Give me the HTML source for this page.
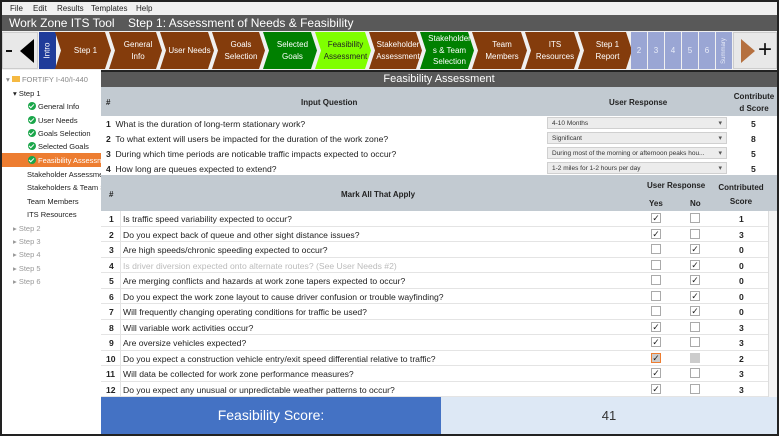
<!DOCTYPE html>
<html><head><meta charset="utf-8"><style>
*{box-sizing:border-box;margin:0;padding:0}
body{width:779px;height:436px;overflow:hidden;background:#222;font-family:"Liberation Sans",sans-serif;position:relative}
.abs{position:absolute}
#menu{left:2px;top:2px;width:775px;height:13px;background:#f0f0f0;font-size:8px;color:#222}
#menu span{position:absolute;top:2px}
#title{left:2px;top:15px;width:775px;height:16px;background:#595959;color:#fff;font-size:12px}
#nav{left:2px;top:31px;width:775px;height:39px;background:#f0f0f0}
.ch{position:absolute;top:1px;height:37px;color:#fff;font-size:8px;display:flex;align-items:center;justify-content:center;text-align:center;line-height:1.45;clip-path:polygon(0 0,calc(100% - 6px) 0,100% 50%,calc(100% - 6px) 100%,0 100%,6px 50%);padding-left:5px}
.br{background:#843c0c}.gr{background:#008000}.lg{background:#7fff00;color:#222}
.sq{position:absolute;top:1px;height:37px;width:16px;background:#9aa6d4;color:#e8ecf8;font-size:8px;display:flex;align-items:center;justify-content:center}
#side{left:2px;top:70px;width:99px;height:364px;background:#fff;font-size:7.5px;color:#222}
#side div{position:absolute;white-space:nowrap}
.ck{display:inline-block;width:8px;height:8px;border-radius:50%;background:#1aa64a;vertical-align:-1px;margin-right:2px;position:relative}
.ck:after{content:"";position:absolute;left:2px;top:1px;width:2px;height:4px;border:solid #fff;border-width:0 1.3px 1.3px 0;transform:rotate(45deg)}
#main{left:101px;top:72px;width:676px;height:325px;background:#fff;font-size:8.6px;color:#222}
.hd{background:#c2cad1;font-weight:bold;font-size:8px}
.row{position:absolute;left:0;width:667px;border-bottom:1px solid #e4e4e4}
.row span{position:absolute;white-space:nowrap}
.dd{position:absolute;left:446px;width:180px;height:12px;background:#ececec;border:1px solid #d0d0d0;font-size:6.5px;padding:2px 4px;color:#333}
.dd:after{content:"▾";position:absolute;right:4px;top:1px;font-size:7px;color:#555}
.cb{position:absolute;width:10px;height:10px;border:1px solid #aaa;background:#fff;font-size:9px;line-height:8px;text-align:center;color:#222}
</style></head><body>
<div id="menu" class="abs"><span style="left:8px">File</span><span style="left:31px">Edit</span><span style="left:55px">Results</span><span style="left:89px">Templates</span><span style="left:134px">Help</span></div>
<div id="title" class="abs"><span class="abs" style="left:7px;top:1px">Work Zone ITS Tool</span><span class="abs" style="left:126px;top:1px">Step 1: Assessment of Needs &amp; Feasibility</span></div>
<div id="nav" class="abs">
<div class="abs" style="left:0;top:1px;width:36px;height:37px;background:#e8e8e8;border:1px solid #ccc"><div class="abs" style="left:3px;top:17px;width:6px;height:2px;background:#111"></div><div class="abs" style="left:17px;top:6px;width:0;height:0;border-top:12px solid transparent;border-bottom:12px solid transparent;border-right:14px solid #000"></div></div>
<div class="abs" style="left:37px;top:1px;width:17px;height:37px;background:#1f3c9a;color:#fff;font-size:8px"><div style="transform:rotate(-90deg);position:absolute;left:-6px;top:14px;width:28px;text-align:center">Intro</div></div>
<div class="ch br" style="left:53px;width:56px">Step 1</div>
<div class="ch br" style="left:107px;width:53px">General<br>Info</div>
<div class="ch br" style="left:158px;width:54px">User Needs</div>
<div class="ch br" style="left:210px;width:53px">Goals<br>Selection</div>
<div class="ch gr" style="left:261px;width:54px">Selected<br>Goals</div>
<div class="ch lg" style="left:313px;width:56px">Feasibility<br>Assessment</div>
<div class="ch br" style="left:367px;width:53px">Stakeholder<br>Assessment</div>
<div class="ch gr" style="left:418px;width:54px">Stakeholder<br>s &amp; Team<br>Selection</div>
<div class="ch br" style="left:470px;width:55px">Team<br>Members</div>
<div class="ch br" style="left:523px;width:55px">ITS<br>Resources</div>
<div class="ch br" style="left:576px;width:54px">Step 1<br>Report</div>
<div class="sq" style="left:629px">2</div><div class="sq" style="left:646px">3</div><div class="sq" style="left:663px">4</div><div class="sq" style="left:680px">5</div><div class="sq" style="left:697px">6</div><div class="sq" style="left:714px;font-size:6px"><span style="transform:rotate(-90deg)">Summary</span></div>
<div class="abs" style="left:731px;top:1px;width:44px;height:37px;background:#e8e8e8;border:1px solid #ccc"><div class="abs" style="left:7px;top:6px;border-top:12px solid transparent;border-bottom:12px solid transparent;border-left:14px solid #b5703f"></div><div class="abs" style="left:24px;top:4px;font-size:24px;line-height:26px;color:#111">+</div></div>
</div>
<div id="side" class="abs">
<div style="left:4px;top:5px;color:#888">▾ <span style="display:inline-block;width:8px;height:6px;background:#f5b942"></span> FORTIFY I-40/I-440</div>
<div style="left:11px;top:19px">▾ Step 1</div>
<div style="left:26px;top:32px"><span class="ck"></span>General Info</div>
<div style="left:26px;top:46px"><span class="ck"></span>User Needs</div>
<div style="left:26px;top:59px"><span class="ck"></span>Goals Selection</div>
<div style="left:26px;top:72px"><span class="ck"></span>Selected Goals</div>
<div style="left:0;top:83px;width:99px;height:14px;background:#ed7d31"></div>
<div style="left:26px;top:86px;color:#fff"><span class="ck"></span>Feasibility Assessme</div>
<div style="left:25px;top:100px">Stakeholder Assessmen</div>
<div style="left:25px;top:113px">Stakeholders &amp; Team Se</div>
<div style="left:25px;top:127px">Team Members</div>
<div style="left:25px;top:140px">ITS Resources</div>
<div style="left:11px;top:154px;color:#999">▸ Step 2</div>
<div style="left:11px;top:167px;color:#999">▸ Step 3</div>
<div style="left:11px;top:180px;color:#999">▸ Step 4</div>
<div style="left:11px;top:194px;color:#999">▸ Step 5</div>
<div style="left:11px;top:207px;color:#999">▸ Step 6</div>
</div>
<div id="main" class="abs">
<div class="abs" style="left:0;top:0;width:676px;height:15px;background:#595959;color:#fff;font-size:11px;text-align:center;line-height:15px">Feasibility Assessment</div>
<div class="abs hd" style="left:0;top:15px;width:676px;height:29px">
<span class="abs" style="left:5px;top:11px">#</span><span class="abs" style="left:200px;top:11px">Input Question</span><span class="abs" style="left:508px;top:11px">User Response</span><span class="abs" style="left:630px;top:4px;width:46px;text-align:center;line-height:12px">Contribute d Score</span></div>
<div class="row" style="top:44px;height:15px;border:0"><span style="left:5px;top:3px"><b>1</b>&nbsp; What is the duration of long-term stationary work?</span><div class="dd" style="top:1px">4-10 Months</div><span style="left:650px;top:3px;font-weight:bold">5</span></div>
<div class="row" style="top:59px;height:15px;border:0"><span style="left:5px;top:3px"><b>2</b>&nbsp; To what extent will users be impacted for the duration of the work zone?</span><div class="dd" style="top:1px">Significant</div><span style="left:650px;top:3px;font-weight:bold">8</span></div>
<div class="row" style="top:74px;height:15px;border:0"><span style="left:5px;top:3px"><b>3</b>&nbsp; During which time periods are noticable traffic impacts expected to occur?</span><div class="dd" style="top:1px">During most of the morning or afternoon peaks hou...</div><span style="left:650px;top:3px;font-weight:bold">5</span></div>
<div class="row" style="top:89px;height:14px;border:0"><span style="left:5px;top:3px"><b>4</b>&nbsp; How long are queues expected to extend?</span><div class="dd" style="top:1px">1-2 miles for 1-2 hours per day</div><span style="left:650px;top:3px;font-weight:bold">5</span></div>
<div class="abs hd" style="left:0;top:103px;width:676px;height:36px">
<span class="abs" style="left:8px;top:15px">#</span><span class="abs" style="left:240px;top:15px">Mark All That Apply</span><span class="abs" style="left:546px;top:6px">User Response</span><span class="abs" style="left:548px;top:24px">Yes</span><span class="abs" style="left:589px;top:24px">No</span><span class="abs" style="left:616px;top:6px;width:48px;text-align:center;line-height:14px">Contributed Score</span></div>
<div class="abs" style="left:667px;top:139px;width:9px;height:186px;background:#f4f4f4;border-left:1px solid #ddd"></div>
<div id="rows"></div>
</div>
<div class="abs" style="left:101px;top:397px;width:340px;height:37px;background:#4472c4;color:#fff;font-size:14px;text-align:center;line-height:37px">Feasibility Score:</div>
<div class="abs" style="left:441px;top:397px;width:336px;height:37px;background:#dde8f5;color:#333;font-size:13px;text-align:center;line-height:37px">41</div>
<script>
var q=[["Is traffic speed variability expected to occur?",1,0,"1"],["Do you expect back of queue and other sight distance issues?",1,0,"3"],["Are high speeds/chronic speeding expected to occur?",0,1,"0"],["Is driver diversion expected onto alternate routes? (See User Needs #2)",0,1,"0"],["Are merging conflicts and hazards at work zone tapers expected to occur?",0,1,"0"],["Do you expect the work zone layout to cause driver confusion or trouble wayfinding?",0,1,"0"],["Will frequently changing operating conditions for traffic be used?",0,1,"0"],["Will variable work activities occur?",1,0,"3"],["Are oversize vehicles expected?",1,0,"3"],["Do you expect a construction vehicle entry/exit speed differential relative to traffic?",1,0,"2"],["Will data be collected for work zone performance measures?",1,0,"3"],["Do you expect any unusual or unpredictable weather patterns to occur?",1,0,"3"]];
var h="";q.forEach(function(r,i){var t=139+i*15.5;var g=i==3?"color:#bbb":"";var s=i==9;
h+='<div class="row" style="top:'+t+'px;height:15.5px"><div style="position:absolute;left:19px;top:0;height:15px;border-left:1px solid #e4e4e4"></div><span style="left:'+(i>8?5:8)+'px;top:3px;font-weight:bold">'+(i+1)+'</span><span style="left:22px;top:3px;'+g+'">'+r[0]+'</span>'+
'<div class="cb" style="left:550px;top:2px;'+(s?'background:#ccc;border-color:#ed7d31':'')+'">'+(r[1]?'✓':'')+'</div><div class="cb" style="left:589px;top:2px;'+(s?'background:#ccc;border-color:#ccc':'')+'">'+(r[2]?'✓':'')+'</div><span style="left:638px;top:3px;font-weight:bold">'+r[3]+'</span></div>';});
document.getElementById("rows").innerHTML=h;
</script>
</body></html>
